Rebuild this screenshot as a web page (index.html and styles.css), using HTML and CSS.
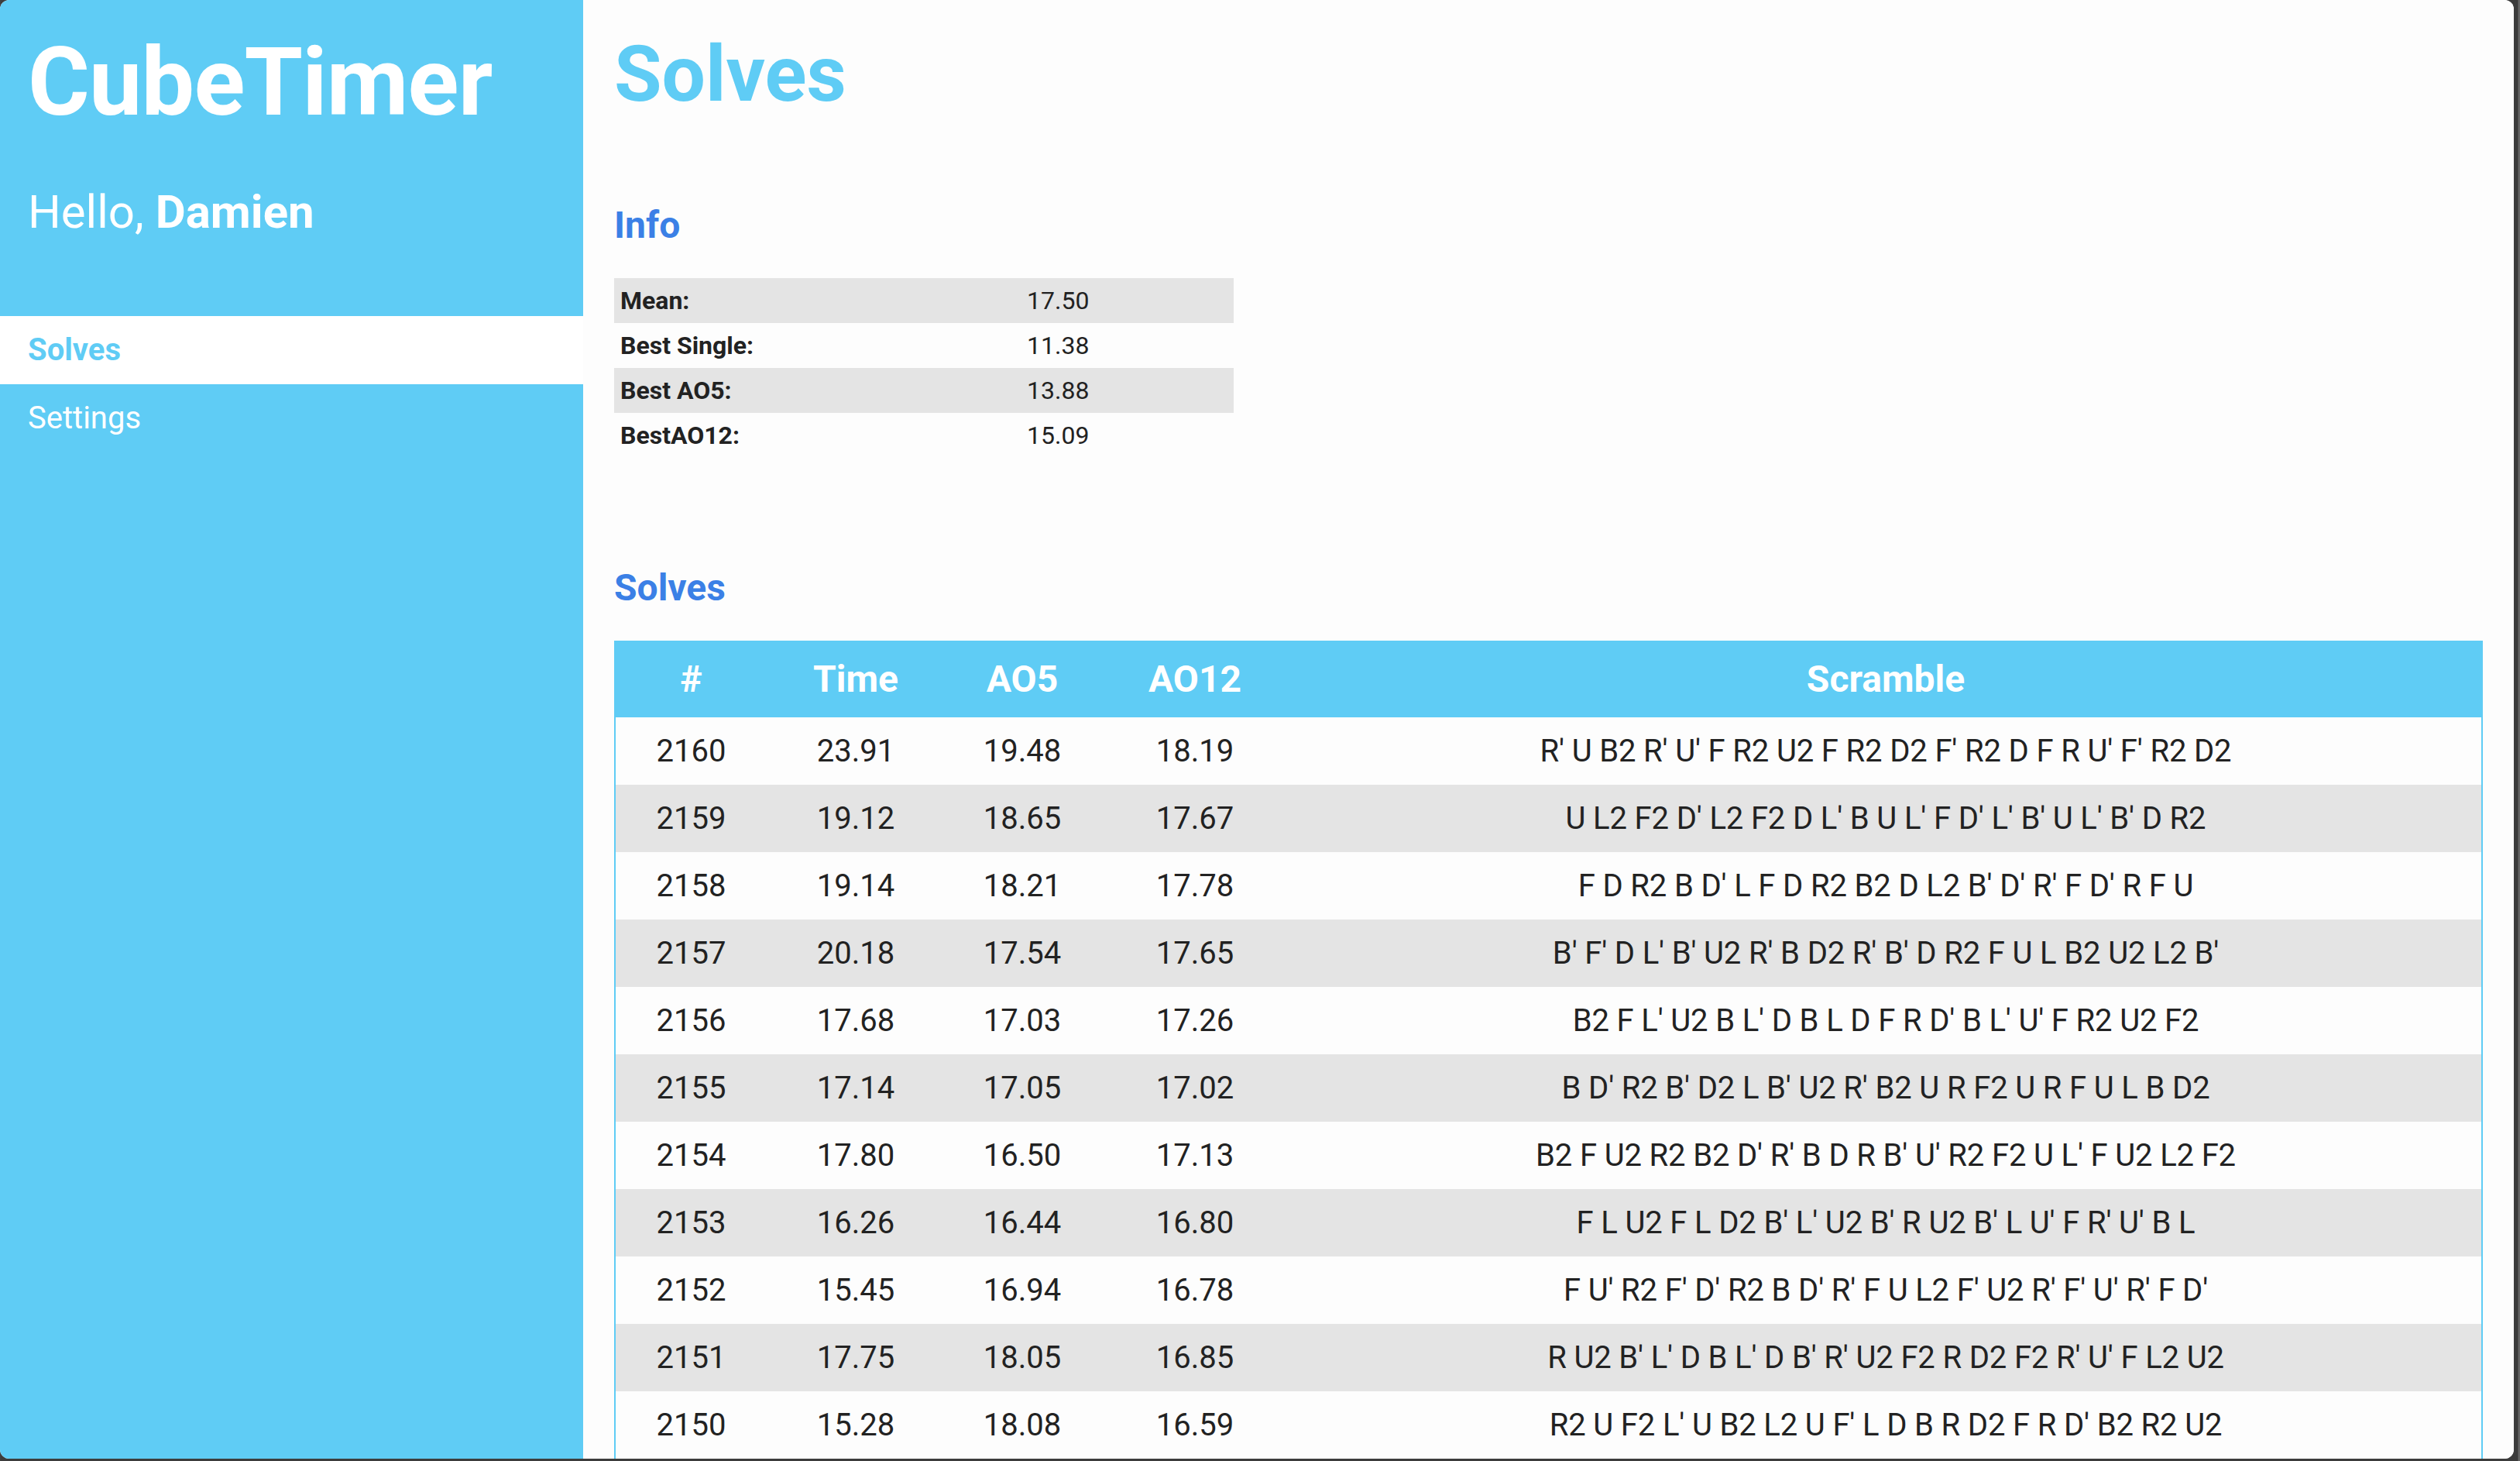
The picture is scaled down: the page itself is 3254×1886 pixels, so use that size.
FILE: index.html
```html
<!DOCTYPE html>
<html lang="en">
<head>
<meta charset="utf-8">
<title>CubeTimer</title>
<link rel="stylesheet" href="styles.css">
</head>
<body>
<div class="window">
  <aside class="sidebar">
    <div class="brand">
      <h1 class="logo">CubeTimer</h1>
      <p class="hello">Hello, <strong>Damien</strong></p>
    </div>
    <nav class="nav">
      <a class="nav-item active" href="#">Solves</a>
      <a class="nav-item" href="#">Settings</a>
    </nav>
  </aside>
  <main class="main">
    <h1 class="page-title">Solves</h1>
    <h2 class="section-title">Info</h2>
    <table class="info">
      <colgroup><col class="info-label"><col class="info-value"></colgroup>
      <tbody>
        <tr><th>Mean:</th><td>17.50</td></tr>
        <tr><th>Best Single:</th><td>11.38</td></tr>
        <tr><th>Best AO5:</th><td>13.88</td></tr>
        <tr><th>BestAO12:</th><td>15.09</td></tr>
      </tbody>
    </table>
    <h2 class="section-title solves-title">Solves</h2>
    <table class="solves">
      <colgroup><col class="c-num"><col class="c-time"><col class="c-ao5"><col class="c-ao12"><col class="c-scr"></colgroup>
      <thead>
        <tr><th>#</th><th>Time</th><th>AO5</th><th>AO12</th><th>Scramble</th></tr>
      </thead>
      <tbody>
        <tr><td>2160</td><td>23.91</td><td>19.48</td><td>18.19</td><td class="scr">R' U B2 R' U' F R2 U2 F R2 D2 F' R2 D F R U' F' R2 D2</td></tr>
        <tr><td>2159</td><td>19.12</td><td>18.65</td><td>17.67</td><td class="scr">U L2 F2 D' L2 F2 D L' B U L' F D' L' B' U L' B' D R2</td></tr>
        <tr><td>2158</td><td>19.14</td><td>18.21</td><td>17.78</td><td class="scr">F D R2 B D' L F D R2 B2 D L2 B' D' R' F D' R F U</td></tr>
        <tr><td>2157</td><td>20.18</td><td>17.54</td><td>17.65</td><td class="scr">B' F' D L' B' U2 R' B D2 R' B' D R2 F U L B2 U2 L2 B'</td></tr>
        <tr><td>2156</td><td>17.68</td><td>17.03</td><td>17.26</td><td class="scr">B2 F L' U2 B L' D B L D F R D' B L' U' F R2 U2 F2</td></tr>
        <tr><td>2155</td><td>17.14</td><td>17.05</td><td>17.02</td><td class="scr">B D' R2 B' D2 L B' U2 R' B2 U R F2 U R F U L B D2</td></tr>
        <tr><td>2154</td><td>17.80</td><td>16.50</td><td>17.13</td><td class="scr">B2 F U2 R2 B2 D' R' B D R B' U' R2 F2 U L' F U2 L2 F2</td></tr>
        <tr><td>2153</td><td>16.26</td><td>16.44</td><td>16.80</td><td class="scr">F L U2 F L D2 B' L' U2 B' R U2 B' L U' F R' U' B L</td></tr>
        <tr><td>2152</td><td>15.45</td><td>16.94</td><td>16.78</td><td class="scr">F U' R2 F' D' R2 B D' R' F U L2 F' U2 R' F' U' R' F D'</td></tr>
        <tr><td>2151</td><td>17.75</td><td>18.05</td><td>16.85</td><td class="scr">R U2 B' L' D B L' D B' R' U2 F2 R D2 F2 R' U' F L2 U2</td></tr>
        <tr><td>2150</td><td>15.28</td><td>18.08</td><td>16.59</td><td class="scr">R2 U F2 L' U B2 L2 U F' L D B R D2 F R D' B2 R2 U2</td></tr>
      </tbody>
    </table>
  </main>
</div>
</body>
</html>
```
FILE: styles.css
```css
html {
  background: linear-gradient(to right, #3c3c3c 3252px, #686868 3252px);
}
body {
  margin: 0;
  font-family: Roboto, "Liberation Sans", sans-serif;
  color: #222;
}
.window {
  width: 3246px;
  height: 1883px;
  background: #fdfdfd;
  border-radius: 12px;
  overflow: hidden;
  display: grid;
  grid-template-columns: 753px 1fr;
}
.sidebar {
  background: #5fccf5;
  color: #fff;
}
.brand {
  padding: 46px 36px 104px;
}
.logo {
  margin: 0;
  font-size: 122px;
  line-height: 1;
  font-weight: 700;
  letter-spacing: -0.8px;
}
.hello {
  margin: 76px 0 0;
  font-size: 60px;
  line-height: 1;
  font-weight: 400;
}
.hello strong {
  font-weight: 700;
}
.nav {
  display: flex;
  flex-direction: column;
}
.nav-item {
  display: block;
  height: 88px;
  line-height: 88px;
  padding: 0 36px;
  font-size: 40px;
  color: #fff;
  text-decoration: none;
}
.nav-item.active {
  background: #fff;
  color: #5fccf5;
  font-weight: 700;
}
.main {
  padding: 0 40px;
  background: #fdfdfd;
}
.page-title {
  margin: 46px 0 0;
  font-size: 100px;
  line-height: 1;
  font-weight: 700;
  color: #5fccf5;
}
.section-title {
  margin: 121px 0 0;
  font-size: 48px;
  line-height: 1;
  font-weight: 700;
  color: #3b80e6;
}
.solves-title {
  margin-top: 144px;
}
.info {
  margin-top: 44px;
  width: 800px;
  border-collapse: collapse;
  table-layout: fixed;
  font-size: 32px;
}
.info-label { width: 525px; }
.info-value { width: 275px; }
.info th,
.info td {
  height: 58px;
  padding: 0 8px;
  text-align: left;
  line-height: 1;
}
.info th {
  font-weight: 700;
}
.info td {
  font-weight: 400;
}
.info tr:nth-child(odd) {
  background: #e4e4e4;
}
.info tr:nth-child(even) {
  background: #fdfdfd;
}
.solves {
  margin-top: 44px;
  width: 2413px;
  border-collapse: collapse;
  table-layout: fixed;
  border-left: 2px solid #5fccf5;
  border-right: 2px solid #5fccf5;
}
.c-num { width: 196px; }
.c-time { width: 230px; }
.c-ao5 { width: 200px; }
.c-ao12 { width: 246px; }
.solves thead tr {
  background: #5fccf5;
}
.solves th {
  height: 99px;
  padding: 0;
  font-size: 48px;
  font-weight: 700;
  color: #fff;
  text-align: center;
  line-height: 1;
}
.solves td {
  height: 87px;
  padding: 0;
  font-size: 40px;
  text-align: center;
  line-height: 1;
  white-space: nowrap;
}
.solves td.scr {
  letter-spacing: -0.15px;
}
.solves tbody tr:nth-child(odd) {
  background: #fdfdfd;
}
.solves tbody tr:nth-child(even) {
  background: #e4e4e4;
}
```
